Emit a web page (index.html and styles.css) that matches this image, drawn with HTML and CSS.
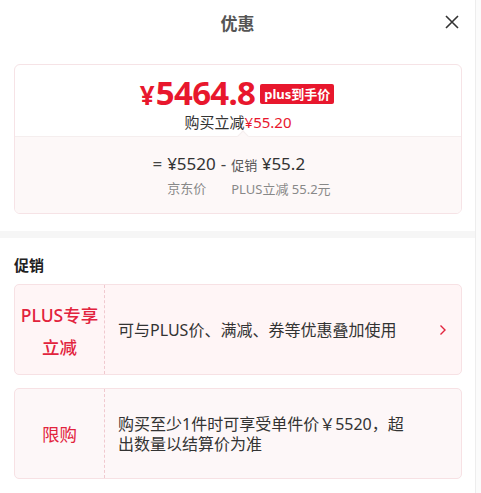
FILE: index.html
```html
<!DOCTYPE html>
<html lang="zh">
<head>
<meta charset="utf-8">
<link rel="stylesheet" href="styles.css">
</head>
<body>
<div class="page">
  <div class="panel">
    <div class="header">
      <div class="title">优惠</div>
      <svg class="close" width="16" height="16" viewBox="0 0 16 16"><path d="M2 2L14 14M14 2L2 14" stroke="#333" stroke-width="1.6" fill="none"/></svg>
    </div>
    <div class="wrap">
      <div class="price-card">
        <div class="pc-top">
          <div class="pc-main">
            <span class="big"><span class="yen">¥</span>5464.8</span>
            <span class="badge">plus到手价</span>
          </div>
          <div class="pc-sub">购买立减<span class="red">¥55.20</span></div>
        </div>
        <div class="pc-bottom">
          <span class="notch"></span>
          <div class="formula">
            <span class="op">=</span>
            <div class="col">
              <div class="f-line"><span class="num">¥5520</span></div>
              <div class="lbl">京东价</div>
            </div>
            <span class="op">-</span>
            <div class="col">
              <div class="f-line"><span class="small">促销</span> <span class="num">¥55.2</span></div>
              <div class="lbl">PLUS立减 55.2元</div>
            </div>
          </div>
        </div>
      </div>
    </div>
    <div class="band"></div>
    <div class="wrap">
      <div class="sec-title">促销</div>
      <div class="promo">
        <div class="p-left">PLUS专享<br>立减</div>
        <div class="p-right">
          <span class="p-text">可与PLUS价、满减、券等优惠叠加使用</span>
          <svg class="chev" width="8" height="12" viewBox="0 0 8 12"><path d="M1.5 1.5L6 6L1.5 10.5" stroke="#e2233d" stroke-width="1.4" fill="none"/></svg>
        </div>
      </div>
      <div class="promo promo2">
        <div class="p-left">限购</div>
        <div class="p-right">
          <span class="p-text p-text2">购买至少1件时可享受单件价￥5520，超出数量以结算价为准</span>
        </div>
      </div>
    </div>
  </div>
  <div class="scroll"></div>
</div>
</body>
</html>
```

FILE: styles.css
```css
* { box-sizing: border-box; }
html, body { margin: 0; padding: 0; background: #fff; }
body {
  font-family: "Noto Sans", "Noto Sans CJK SC", sans-serif;
  color: #222;
}
.page { display: flex; width: 481px; height: 493px; overflow: hidden; }
.panel { width: 476px; border-right: 1px solid #ededed; }
.scroll { flex: 1; background: #fbfbfb; }
.header {
  height: 44px;
  display: flex;
  align-items: center;
  justify-content: center;
  position: relative;
}
.title { font-size: 17px; font-weight: 700; color: #555; }
.close { position: absolute; right: 15px; top: 14px; }
.wrap { padding: 20px 13px 0 14px; }
.price-card {
  border: 1px solid #f6e3e6;
  border-radius: 6px;
  overflow: hidden;
}
.pc-top {
  height: 71px;
  display: flex;
  flex-direction: column;
  align-items: center;
  padding-top: 9px;
}
.pc-main { display: flex; align-items: center; gap: 5px; height: 37px; margin-left: -2px; }
.big {
  font-size: 33px;
  font-weight: 700;
  color: #e8172d;
  letter-spacing: -0.7px;
  line-height: 1;
}
.yen { font-size: 26px; margin-right: 2px; }
.badge {
  background: #e8172d;
  color: #fff;
  font-size: 13px;
  font-weight: 700;
  padding: 0 4px;
  height: 20px;
  line-height: 20px;
  border-radius: 2px;
  margin-top: 3px;
}
.pc-sub { font-size: 15px; color: #333; line-height: 20px; margin-top: 1px; }
.red { color: #e8172d; }
.pc-bottom {
  position: relative;
  background: #fdf8f8;
  border-top: 1px solid #f5eeee;
  height: 77px;
  display: flex;
  justify-content: center;
  padding-top: 15px;
}
.notch {
  position: absolute;
  left: 224px;
  top: -5px;
  width: 8px;
  height: 8px;
  background: #fdf8f8;
  border-top: 1px solid #f5eeee;
  border-left: 1px solid #f5eeee;
  transform: rotate(45deg);
}
.formula { display: flex; margin-left: 2px; }
.col { display: flex; flex-direction: column; }
.op { font-size: 17px; color: #444; line-height: 24px; padding: 0 5px; }
.f-line { font-size: 17px; color: #333; line-height: 24px; white-space: nowrap; }
.num { font-size: 17px; }
.small { font-size: 13px; color: #555; }
.lbl { font-size: 13px; color: #888; line-height: 24px; white-space: nowrap; }
.band { height: 7px; background: #f6f6f6; margin-top: 17px; }
.sec-title { font-size: 15px; font-weight: 700; color: #222; line-height: 20px; margin-top: -3px; }
.promo {
  margin-top: 9px;
  height: 91px;
  display: flex;
  background: #fff5f6;
  border: 1px solid #f7e1e4;
  border-radius: 5px;
}
.promo2 { margin-top: 13px; background: #fdf7f8; }
.p-left {
  width: 90px;
  flex: none;
  border-right: 1px dashed #f0c9cf;
  display: flex;
  align-items: center;
  justify-content: center;
  text-align: center;
  color: #e2233d;
  font-size: 17.5px;
  line-height: 32px;
  font-weight: 500;
  padding-top: 2px;
}
.promo2 .p-left { font-weight: 400; padding-top: 0; }
.p-right {
  flex: 1;
  display: flex;
  align-items: center;
  justify-content: space-between;
  padding: 0 14px 0 13px;
}
.p-text { font-size: 16px; color: #333; line-height: 20px; }
.p-text2 { width: 292px; line-height: 20px; }
```
